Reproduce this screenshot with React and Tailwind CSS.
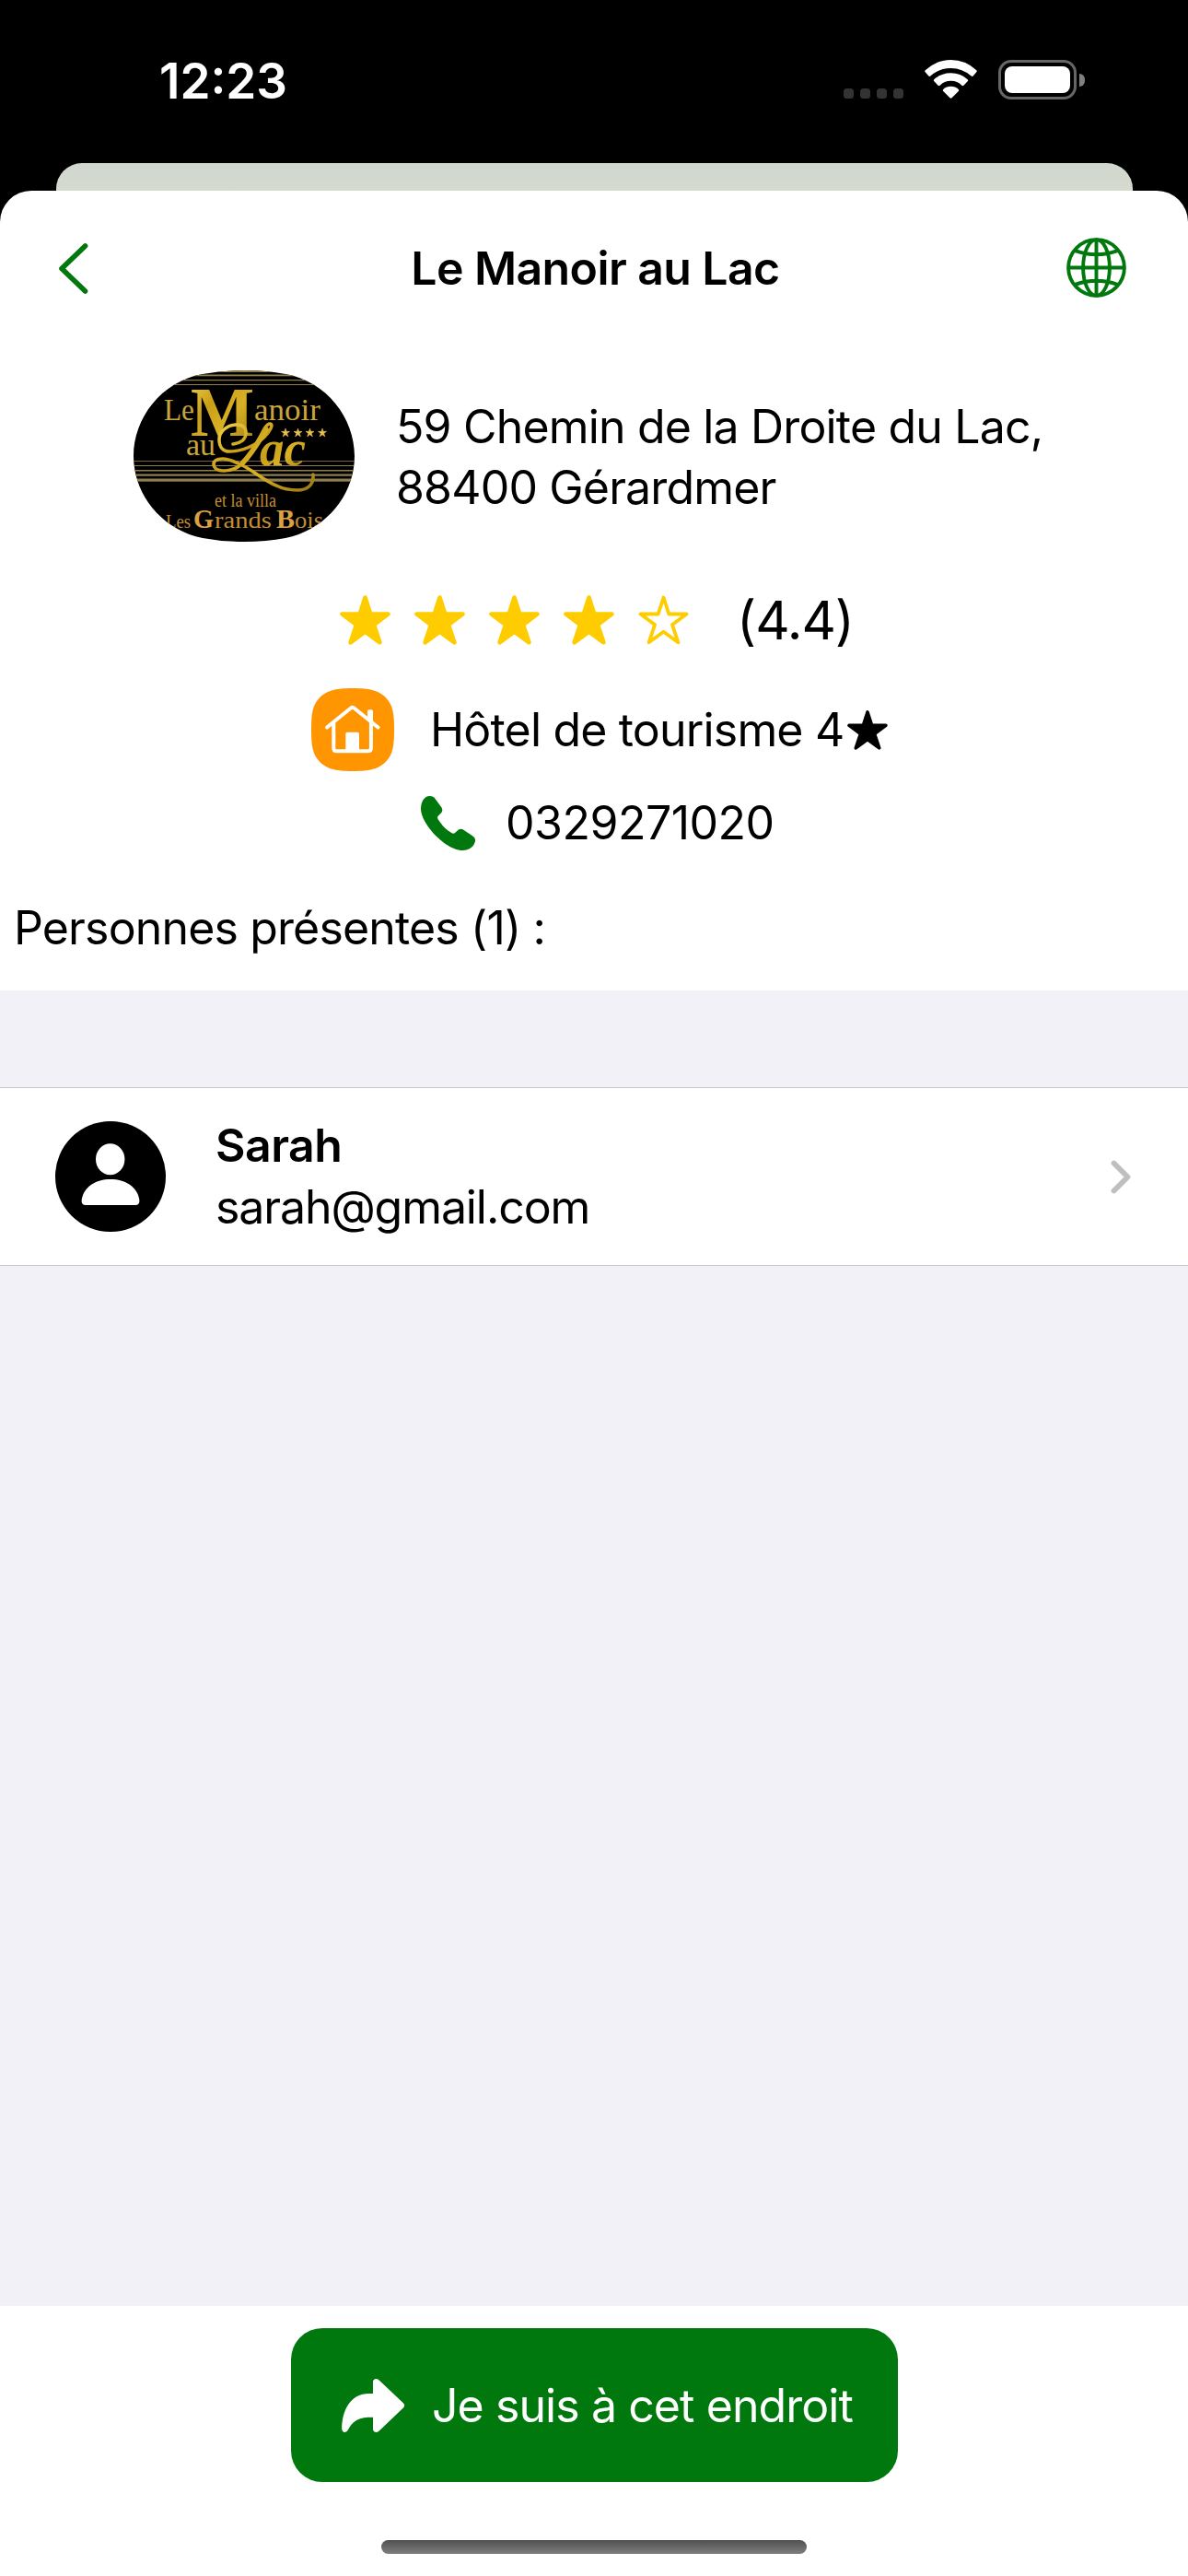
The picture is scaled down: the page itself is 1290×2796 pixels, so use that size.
import React from "react";

const STAR_POINTS =
  "27.5,2.5 33.3,20.5 52.5,20.5 37,32.1 43.4,51.3 27.5,39.7 11.6,51.3 18,32.1 2.5,20.5 21.700,20.500";

function Star({ className, hollow = false }) {
  return (
    <svg viewBox="0 0 55 54" className={className}>
      <polygon
        points={STAR_POINTS}
        fill={hollow ? "none" : "currentColor"}
        stroke="currentColor"
        strokeWidth={hollow ? 3.8 : 4.6}
        strokeLinejoin="round"
      />
    </svg>
  );
}

function WifiIcon() {
  return (
    <svg viewBox="312 45 172 127" className="h-[42px] w-[57px]" fill="#fff">
      <path d="M314 85Q311 82 314 79Q350 45 398 45Q446 45 482 79Q485 82 482 85L471 98Q468 101 465 98Q436 72 398 72Q360 72 331 98Q328 101 325 98Z" />
      <path d="M343 115Q340 112 343 109Q366 88 398 88Q430 88 453 109Q456 112 453 115L440 129Q437 132 434 129Q420 114 398 114Q376 114 362 129Q359 132 356 129Z" />
      <path d="M373 148Q370 145 373 142Q383 132 398 132Q413 132 423 142Q426 145 423 148L401 170Q398 173 395 170Z" />
    </svg>
  );
}

function StatusBar() {
  return (
    <div className="flex h-[177px] items-start pl-[173px] pr-[112px] text-white">
      <span className="mt-[55px] text-[53px] font-semibold leading-[66px]">12:23</span>
      <div className="ml-auto flex items-start">
        <div className="mt-[96px] flex gap-[7px]">
          {[0, 1, 2, 3].map((i) => (
            <span key={i} className="size-[11px] rounded-[3.5px] bg-[#333333]" />
          ))}
        </div>
        <div className="ml-[23px] mt-[65px]">
          <WifiIcon />
        </div>
        <div className="ml-[23px] mt-[65px] flex items-center">
          <div className="flex h-[43px] w-[85px] items-center justify-center rounded-[14px] border-[3.5px] border-[#666666]">
            <div className="h-[29px] w-[71px] rounded-[8px] bg-white" />
          </div>
          <div className="ml-[3px] h-[14px] w-[6px] rounded-r-full bg-[#808080]" />
        </div>
      </div>
    </div>
  );
}

function GlobeIcon() {
  return (
    <svg viewBox="0 0 65 65" className="size-[65px]" fill="none" stroke="currentColor" strokeWidth="3.9">
      <circle cx="32.5" cy="32.5" r="30.4" />
      <ellipse cx="32.5" cy="32.5" rx="14.400" ry="30.400" />
      <path d="M32.500 2v61M2 32.500h61M9.500 14.200Q32.500 22.400 55.500 14.200M9.500 50.800Q32.500 42.600 55.500 50.800" />
    </svg>
  );
}

function NavBar() {
  return (
    <div className="flex h-[167px] items-center justify-between pl-[62px] pr-[67px] text-[#00780d]">
      <svg viewBox="0 0 35 56" className="h-[56px] w-[73px]" preserveAspectRatio="xMinYMid meet" fill="none" stroke="currentColor" strokeWidth="5.6" strokeLinecap="round" strokeLinejoin="round">
        <path d="M30.500 4L5 28.500L30.500 53" />
      </svg>
      <h1 className="text-[50px] font-semibold leading-[66px] tracking-[-0.6px] text-black">Le Manoir au Lac</h1>
      <GlobeIcon />
    </div>
  );
}

function HotelLogo() {
  return (
    <svg viewBox="0 0 240 186" className="h-[186px] w-[240px] shrink-0">
      <defs>
        <clipPath id="badge">
          <path d="M0 93C0 52 30 12 75 4Q96 0 120 0Q144 0 165 4C210 12 240 52 240 93C240 134 210 173 165 182Q144 186 120 186Q96 186 75 182C30 173 0 134 0 93Z" />
        </clipPath>
        <linearGradient id="gold" x1="0" y1="0" x2="1" y2="1">
          <stop offset="0" stopColor="#f3d550" />
          <stop offset="0.350" stopColor="#c99f17" />
          <stop offset="0.600" stopColor="#d9b125" />
          <stop offset="1" stopColor="#9a7812" />
        </linearGradient>
      </defs>
      <g clipPath="url(#badge)">
        <rect width="240" height="186" fill="#000" />
        <g fill="#8f7f4f">
          <rect y="0" width="240" height="2" />
          <rect y="4.500" width="240" height="1.800" />
          <rect y="10" width="240" height="1.200" />
          <rect y="15" width="240" height="1" />
          <rect y="98" width="240" height="0.800" />
          <rect y="103" width="240" height="1" />
          <rect y="108" width="240" height="1.500" />
          <rect y="112.500" width="240" height="2.200" />
          <rect y="117.500" width="240" height="3.200" />
        </g>
        <g fontFamily="'Liberation Serif', serif" fill="#c9a63a">
          <text x="33" y="54" fontSize="33" textLength="33" lengthAdjust="spacingAndGlyphs">Le</text>
          <text x="62" y="71" fontSize="76" fontWeight="700" fill="url(#gold)" textLength="69" lengthAdjust="spacingAndGlyphs">M</text>
          <text x="131" y="54" fontSize="33" textLength="72" lengthAdjust="spacingAndGlyphs">anoir</text>
          <text x="57" y="92" fontSize="33" textLength="32" lengthAdjust="spacingAndGlyphs">au</text>
          <g fill="none" stroke="url(#gold)" strokeLinecap="round">
            <path d="M108 80C116 79 122 75 122 68C122 61 117 59 112 59C101 59 93 67 93 75C93 83 97 88 104 88C122 88 142 77 149 63C152 57 147 56 143 62C136 74 129 90 118 101C112 107 105 109 98 109C91 109 87 106 87 102C87 98 91 96 97 96C105 96 111 100 118 103C132 110 142 120 155 125C163 129 171 130 178 130C188 130 196 125 195 113" strokeWidth="3.600" />
            <path d="M144 64C136 77 129 90 118 101" strokeWidth="5.500" />
          </g>
          <text x="137" y="103" fontSize="54" fontStyle="italic" fontWeight="700" fill="url(#gold)" textLength="50" lengthAdjust="spacingAndGlyphs">ac</text>
          <text x="88" y="148" fontSize="20" fill="#c28d34" textLength="67" lengthAdjust="spacingAndGlyphs">et la villa</text>
          <g fill="#c28d34">
            <text x="35" y="170.500" fontSize="21" textLength="27" lengthAdjust="spacingAndGlyphs">Les</text>
            <text x="65" y="171" fontSize="30" fontWeight="700" fill="#dba044" textLength="22" lengthAdjust="spacingAndGlyphs">G</text>
            <text x="88" y="170.500" fontSize="26" textLength="62" lengthAdjust="spacingAndGlyphs">rands</text>
            <text x="155" y="171" fontSize="30" fontWeight="700" fill="#dba044">B</text>
            <text x="175" y="170.500" fontSize="26" textLength="31" lengthAdjust="spacingAndGlyphs">ois</text>
          </g>
        </g>
        {[160, 173.500, 186.500, 200].map((x) => (
          <svg key={x} x={x} y="62.500" width="10" height="10" viewBox="0 0 55 54">
            <polygon points={STAR_POINTS} fill="#e8bf52" stroke="#e8bf52" strokeWidth="3" />
          </svg>
        ))}
      </g>
    </svg>
  );
}

function HouseTile() {
  return (
    <svg viewBox="0 0 90 90" className="size-[90px]">
      <path d="M0 45C0 30 1 21 6 14C14 3 24 0 45 0S76 3 84 14C89 21 90 30 90 45S89 69 84 76C76 87 66 90 45 90S14 87 6 76C1 69 0 60 0 45Z" fill="#ff9500" />
      <path d="M17 42.500L43 21.500Q44.700 20 46.400 21.500L72.500 42.500M24.300 38V65Q24.300 68.300 27.500 68.300H61.600Q64.900 68.300 64.900 65V38" fill="none" stroke="#fff" strokeWidth="4" strokeLinecap="round" strokeLinejoin="round" />
      <path d="M61 34V25Q61 23.300 62.700 23.300H65.300Q67 23.300 67 25V39ZM37.300 69V49.500Q37.300 47.700 39 47.700H50.200Q52 47.700 52 49.500V69Z" fill="#fff" />
    </svg>
  );
}

function PhoneIcon() {
  return (
    <svg viewBox="381 366 177 177" className="size-[59px]" fill="#00780d">
      <path d="M381 408C381 385 392 366 410 366Q422 366 427 374L448 403Q454 412 448 420L437 431Q433 436 438 443C452 465 465 476 481 486Q487 490 492 486L503 476Q511 470 520 476L551 497Q559 502 558 512C555 530 538 543 518 543C480 543 440 507 420 485C397 458 381 430 381 408Z" />
    </svg>
  );
}

function PersonRow({ name, email }) {
  return (
    <div className="flex h-[194px] items-center border-y border-[#c6c6c8] bg-white pl-[60px] pr-[62px]">
      <svg viewBox="0 0 120 120" className="size-[120px]">
        <circle cx="60" cy="60" r="60" />
        <ellipse cx="59.700" cy="41.300" rx="15.700" ry="17" fill="#fff" />
        <path d="M33 91Q28 91 28.700 85C31 71 44 63 60 63C76 63 89 71 91.300 85Q92 91 87 91Z" fill="#fff" />
      </svg>
      <div className="ml-[54px] flex flex-col leading-[67px]">
        <span className="font-semibold tracking-[-0.5px]">{name}</span>
        <span className="tracking-[-1.1px]">{email}</span>
      </div>
      <svg viewBox="0 0 22 37" className="ml-auto h-[37px] w-[22px]" fill="none" stroke="#bfbfbf" strokeWidth="5.800" strokeLinecap="round" strokeLinejoin="round">
        <path d="M3.500 3.500L18.500 18.500L3.500 33.500" />
      </svg>
    </div>
  );
}

export default function App() {
  return (
    <div className="flex h-[2796px] w-[1290px] flex-col overflow-hidden bg-black font-['Inter',sans-serif] text-[50px] leading-[66px] text-black">
      <StatusBar />
      <div className="mx-[60.5px] h-[30px] shrink-0 rounded-t-[28px] bg-gradient-to-b from-[#d0d7cd] to-[#d6dacf]" />
      <main className="flex flex-1 flex-col rounded-t-[34px] bg-white">
        <NavBar />
        <section className="flex items-center pl-[145px] pt-[28px]">
          <HotelLogo />
          <p className="ml-[45px] pt-[2px] tracking-[-0.83px]">
            59 Chemin de la Droite du Lac,
            <br />
            88400 Gérardmer
          </p>
        </section>
        <div className="mt-[52px] flex h-[66px] items-center pl-[369px]">
          <div className="flex gap-[26px] text-[#ffcc00]">
            <Star className="h-[54px] w-[55px]" />
            <Star className="h-[54px] w-[55px]" />
            <Star className="h-[54px] w-[55px]" />
            <Star className="h-[54px] w-[55px]" />
            <Star className="h-[54px] w-[55px]" hollow />
          </div>
          <span className="ml-[52px] text-[58px] tracking-[-1px]">(4.4)</span>
        </div>
        <div className="mt-[41px] flex h-[90px] items-center pl-[338px]">
          <HouseTile />
          <span className="ml-[39px] tracking-[-0.82px]">Hôtel de tourisme 4</span>
          <Star className="ml-[4px] h-[43px] w-[44px]" />
        </div>
        <div className="mt-[23px] flex h-[66px] items-center pl-[457px]">
          <PhoneIcon />
          <span className="ml-[33px] tracking-[-0.5px]">0329271020</span>
        </div>
        <h2 className="mt-[48px] h-[101px] pl-[15px] tracking-[-0.85px]">Personnes présentes (1) :</h2>
        <section className="flex h-[1428px] flex-col bg-[#f2f1f7] pt-[105px]">
          <PersonRow name="Sarah" email="sarah@gmail.com" />
        </section>
        <footer className="flex flex-1 flex-col items-center pt-[24px]">
          <button className="ml-px flex h-[167px] w-[659px] items-center rounded-[34px] bg-[#00780d] pl-[55px] text-white">
            <svg viewBox="33 33 207 175" className="h-[58px] w-[69px]" fill="currentColor">
              <path d="M135 42Q136 33 146 33Q151 33 156 38L235 113Q241 120 235 127L156 203Q151 208 146 208Q137 208 135 199V159H118C80 161 64 180 54 199Q50 208 43 208Q34 208 33 197C33 135 62 81 122 81H135Z" />
            </svg>
            <span className="ml-[29px] tracking-[-0.92px]">Je suis à cet endroit</span>
          </button>
          <div className="mt-[63px] h-[15px] w-[462px] rounded-full bg-gradient-to-b from-[#505050] to-[#7f7f7f]" />
        </footer>
      </main>
    </div>
  );
}
